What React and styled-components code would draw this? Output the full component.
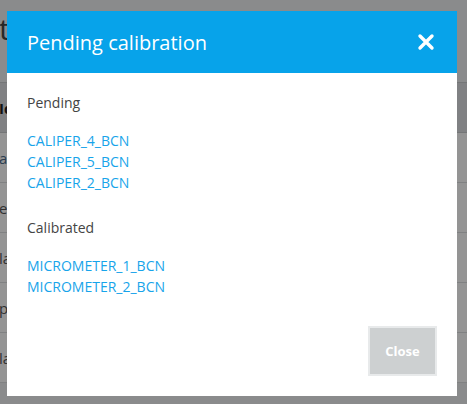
import React from "react";
import styled, { createGlobalStyle } from "styled-components";

const GlobalStyle = createGlobalStyle`
  html, body {
    margin: 0;
    padding: 0;
    background: #eef0f1;
    font-family: "Open Sans", "Liberation Sans", sans-serif;
    overflow: hidden;
  }
`;

const pending = ["CALIPER_4_BCN", "CALIPER_5_BCN", "CALIPER_2_BCN"];
const calibrated = ["MICROMETER_1_BCN", "MICROMETER_2_BCN"];
const rows = [
  { text: "ar", link: true },
  { text: "e", badge: true },
  { text: "la" },
  { text: "p" },
  { text: "la" },
];

export default function App() {
  return (
    <>
      <GlobalStyle />
      <Page>
        <PageTitle>t</PageTitle>
        <Table>
          <HeadRow>Id</HeadRow>
          {rows.map((r, i) => (
            <Row key={i} $link={r.link}>
              {r.text}
              {r.badge && <Badge />}
            </Row>
          ))}
        </Table>
      </Page>
      <Overlay />
      <Modal>
        <ModalHeader>
          <ModalTitle>Pending calibration</ModalTitle>
          <CloseIcon aria-label="close">
            <svg width="18" height="18" viewBox="0 0 18 18">
              <path
                d="M3 3 L15 15 M15 3 L3 15"
                stroke="#fff"
                strokeWidth="3.4"
                strokeLinecap="round"
              />
            </svg>
          </CloseIcon>
        </ModalHeader>
        <ModalBody>
          <Section>
            <SectionLabel>Pending</SectionLabel>
            <LinkList>
              {pending.map((p) => (
                <ItemLink key={p} href="#">{p}</ItemLink>
              ))}
            </LinkList>
          </Section>
          <Section>
            <SectionLabel>Calibrated</SectionLabel>
            <LinkList>
              {calibrated.map((p) => (
                <ItemLink key={p} href="#">{p}</ItemLink>
              ))}
            </LinkList>
          </Section>
        </ModalBody>
        <ModalFooter>
          <CloseButton>Close</CloseButton>
        </ModalFooter>
      </Modal>
    </>
  );
}

const Page = styled.div`
  height: 404px;
  display: flex;
  flex-direction: column;
`;

const PageTitle = styled.h1`
  margin: 0;
  height: 82px;
  padding-top: 8px;
  box-sizing: border-box;
  font-size: 30px;
  font-weight: 400;
  color: #444;
  margin-left: -1px;
`;

const Table = styled.div`
  display: flex;
  flex-direction: column;
  border-top: 1px solid #c8cbcd;
`;

const HeadRow = styled.div`
  height: 49px;
  display: flex;
  align-items: center;
  background: #dcdfe2;
  border-bottom: 1px solid #c8cbcd;
  font-weight: 700;
  font-size: 15px;
  color: #222;
  margin-left: -1px;
`;

const Row = styled.div`
  height: 49px;
  display: flex;
  align-items: center;
  background: #fff;
  border-bottom: 1px solid #dcdee0;
  font-size: 15px;
  color: ${(p) => (p.$link ? "#4a6a8a" : "#555")};
  margin-left: -1px;
`;

const Badge = styled.span`
  display: inline-block;
  width: 8px;
  height: 14px;
  background: #f0a030;
  margin-left: 1px;
`;

const Overlay = styled.div`
  position: fixed;
  inset: 0;
  background: rgba(0, 0, 0, 0.42);
`;

const Modal = styled.div`
  position: fixed;
  left: 7px;
  top: 11px;
  width: 450px;
  height: 385px;
  background: #fff;
  display: flex;
  flex-direction: column;
`;

const ModalHeader = styled.div`
  height: 62px;
  background: #07a3ea;
  display: flex;
  align-items: center;
  justify-content: space-between;
  padding: 0 22px 0 20px;
`;

const ModalTitle = styled.h2`
  margin: 0;
  font-size: 20px;
  font-weight: 400;
  color: #fff;
`;

const CloseIcon = styled.span`
  display: flex;
  cursor: pointer;
`;

const ModalBody = styled.div`
  padding: 20px 20px 0;
  display: flex;
  flex-direction: column;
  gap: 25px;
`;

const Section = styled.div`
  display: flex;
  flex-direction: column;
  gap: 17px;
`;

const SectionLabel = styled.div`
  font-size: 14px;
  line-height: 20px;
  color: #444;
`;

const LinkList = styled.div`
  display: flex;
  flex-direction: column;
`;

const ItemLink = styled.a`
  font-size: 14px;
  line-height: 21px;
  color: #17a4ea;
  text-decoration: none;
`;

const ModalFooter = styled.div`
  margin-top: auto;
  display: flex;
  justify-content: flex-end;
  padding: 0 20px 20px;
`;

const CloseButton = styled.button`
  width: 69px;
  height: 50px;
  background: #cdd0d1;
  border: 2px solid #e8eaeb;
  color: #fff;
  font-family: "Open Sans", "Liberation Sans", sans-serif;
  font-weight: 700;
  font-size: 13px;
  cursor: pointer;
`;
